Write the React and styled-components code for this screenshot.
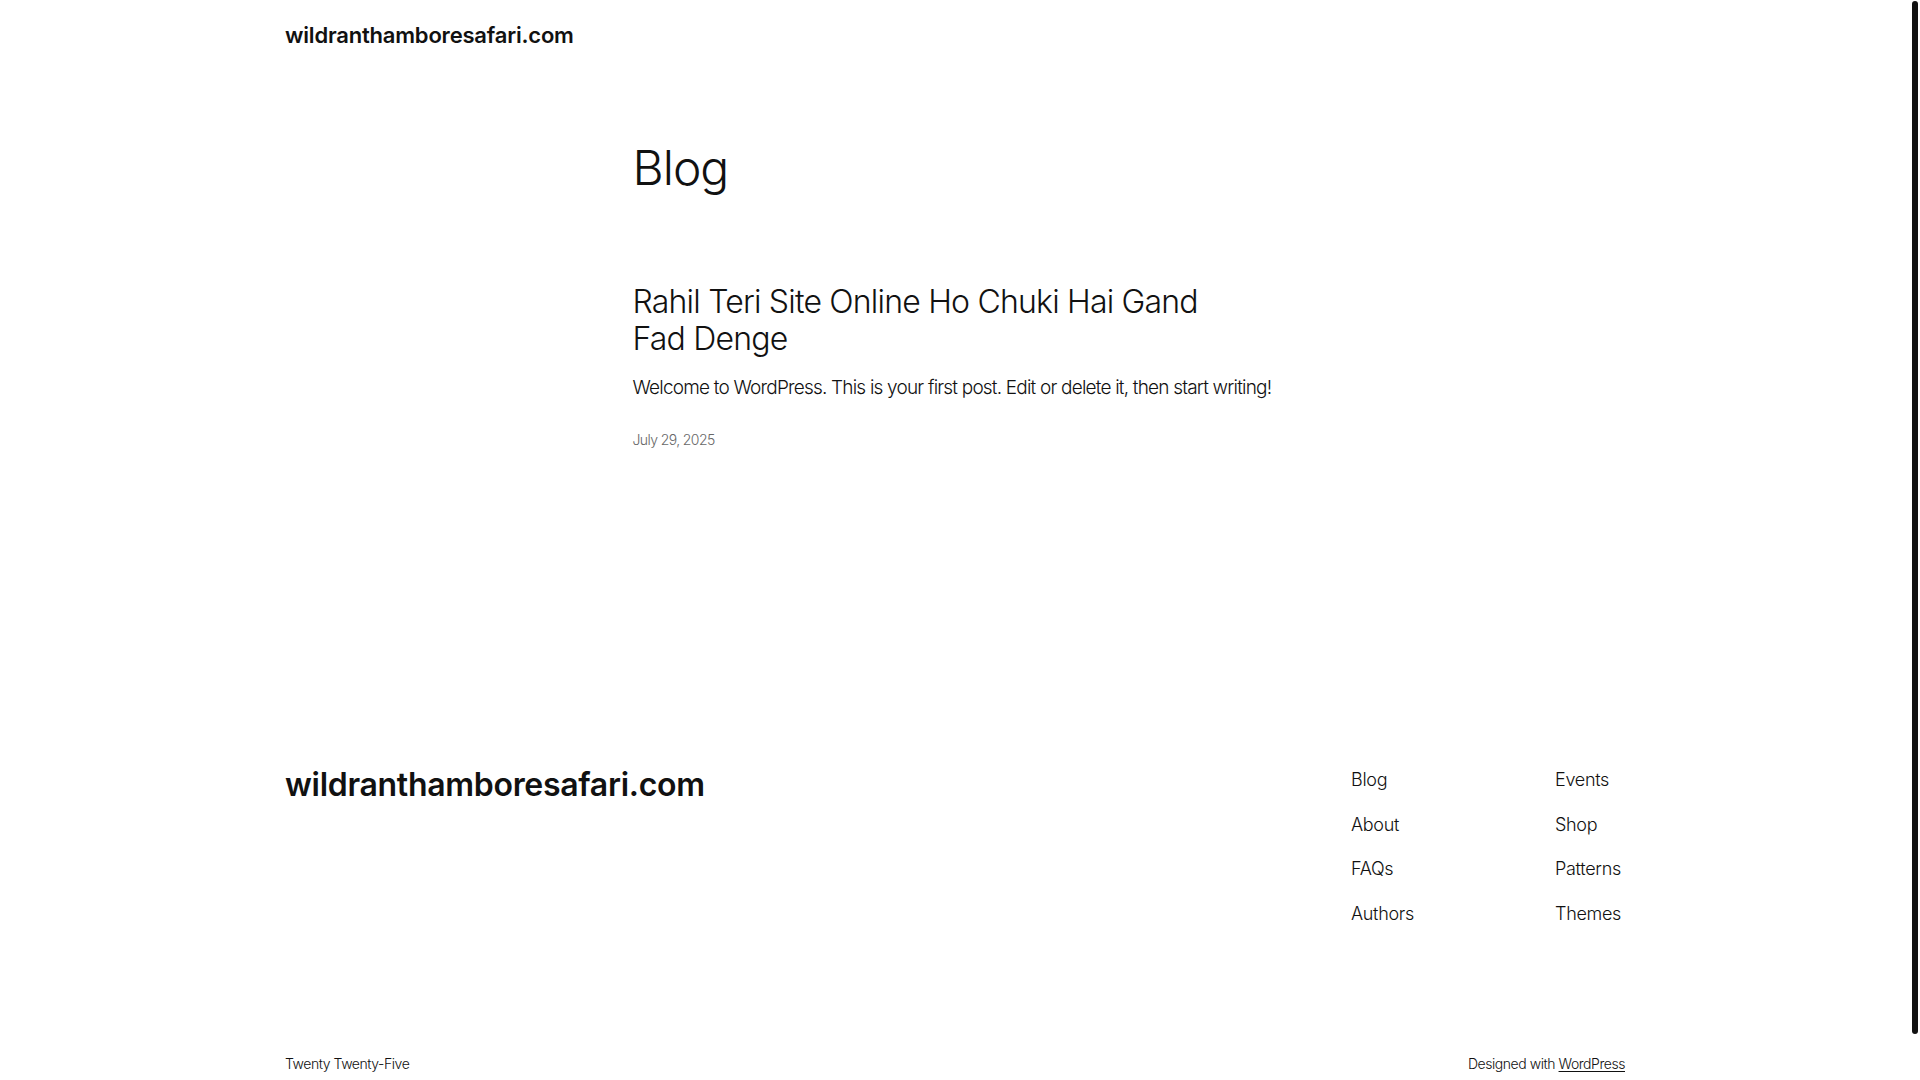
import React from "react";
import styled, { createGlobalStyle } from "styled-components";

const FONT = `Inter, "Noto Sans", "Liberation Sans", sans-serif`;

const GlobalStyle = createGlobalStyle`
  html {
    background: #ffffff;
  }

  body {
    margin: 0;
    /* room for the window's scroll bar gutter */
    padding-right: 10px;
    font-family: ${FONT};
    font-weight: 300;
    color: #111111;
    -webkit-font-smoothing: antialiased;
  }

  a {
    color: inherit;
    text-decoration: none;
  }
`;

const ScrollThumb = styled.div`
  position: fixed;
  top: 1px;
  right: 2px;
  width: 6px;
  height: 1033px;
  border-radius: 3px;
  background: #111111;
`;

const Wide = styled.div`
  max-width: 1340px;
  margin: 0 auto;
`;

const Header = styled(Wide)`
  padding-top: 20px;
`;

const SiteTitle = styled.a`
  display: block;
  font-size: ${(p) => p.$size}px;
  font-weight: 600;
  line-height: 1.4;
  letter-spacing: ${(p) => (p.$size > 24 ? "-0.3px" : "-0.2px")};
  white-space: nowrap;
`;

const Main = styled.main`
  max-width: 645px;
  margin: 0 auto;
  padding-top: 90.5px;
`;

const PageTitle = styled.h1`
  margin: 0;
  font-size: 48px;
  font-weight: 300;
  line-height: 1.125;
  letter-spacing: -1px;
`;

const PostList = styled.ul`
  list-style: none;
  margin: 89px 0 0;
  padding: 0;
`;

const PostTitle = styled.h2`
  margin: 0;
  font-size: 32px;
  font-weight: 300;
  line-height: 1.15;
  letter-spacing: -0.8px;
  text-wrap: pretty;
`;

const Excerpt = styled.p`
  margin: 17px 0 0;
  font-size: 19px;
  line-height: 1.4;
  letter-spacing: -0.8px;
`;

const PostDate = styled.time`
  display: block;
  margin-top: 29px;
  font-size: 14px;
  line-height: 1.4;
  letter-spacing: -0.6px;
  color: #686868;
`;

const Footer = styled(Wide)`
  margin-top: 313px;
  padding-bottom: 50px;
`;

const FooterTop = styled.div`
  display: flex;
  justify-content: space-between;
  align-items: flex-start;
`;

const NavColumns = styled.nav`
  display: grid;
  grid-template-columns: 204px 70px;
  margin-top: 4px;
`;

const NavList = styled.ul`
  list-style: none;
  margin: 0;
  padding: 0;
  display: flex;
  flex-direction: column;
  gap: 19.3px;
`;

const NavLink = styled.a`
  display: block;
  font-size: 18px;
  line-height: 1.4;
  letter-spacing: -0.3px;
  white-space: nowrap;
`;

const FooterBottom = styled.div`
  display: flex;
  justify-content: space-between;
  margin-top: 128px;
  font-size: 14px;
  line-height: 1.4;
  letter-spacing: -0.45px;
`;

const Credit = styled.p`
  margin: 0;
`;

const Underlined = styled.a`
  text-decoration: underline;
  text-underline-offset: 2px;
`;

const columns = [
  ["Blog", "About", "FAQs", "Authors"],
  ["Events", "Shop", "Patterns", "Themes"],
];

export default function App() {
  return (
    <>
      <GlobalStyle />
      <Header as="header">
        <SiteTitle href="#" $size={22}>
          wildranthamboresafari.com
        </SiteTitle>
      </Header>

      <Main>
        <PageTitle>Blog</PageTitle>
        <PostList>
          <li>
            <PostTitle>
              <a href="#">Rahil Teri Site Online Ho Chuki Hai Gand Fad Denge</a>
            </PostTitle>
            <Excerpt>
              Welcome to WordPress. This is your first post. Edit or delete it,
              then start writing!
            </Excerpt>
            <PostDate dateTime="2025-07-29">July 29, 2025</PostDate>
          </li>
        </PostList>
      </Main>

      <Footer as="footer">
        <FooterTop>
          <SiteTitle href="#" $size={32}>
            wildranthamboresafari.com
          </SiteTitle>
          <NavColumns>
            {columns.map((items, i) => (
              <NavList key={i}>
                {items.map((label) => (
                  <li key={label}>
                    <NavLink href="#">{label}</NavLink>
                  </li>
                ))}
              </NavList>
            ))}
          </NavColumns>
        </FooterTop>
        <FooterBottom>
          <Credit>Twenty Twenty-Five</Credit>
          <Credit>
            Designed with <Underlined href="#">WordPress</Underlined>
          </Credit>
        </FooterBottom>
      </Footer>

      <ScrollThumb />
    </>
  );
}
